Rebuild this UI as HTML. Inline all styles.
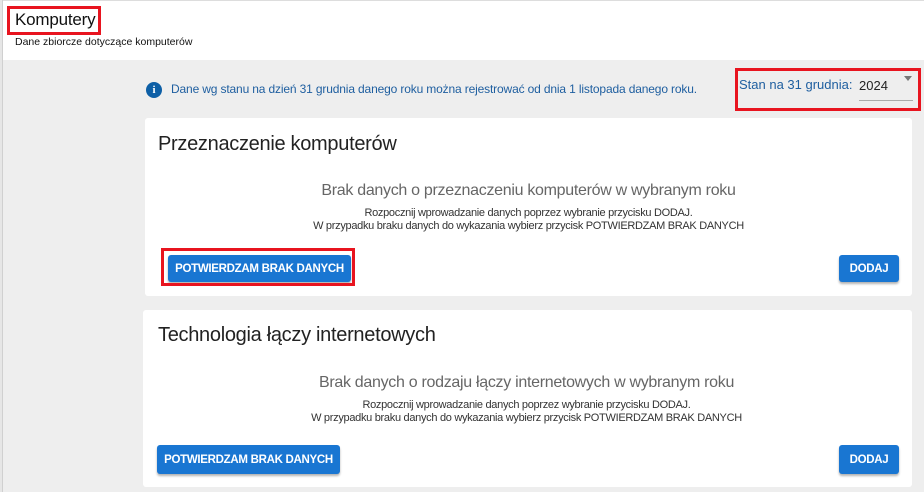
<!DOCTYPE html>
<html><head><meta charset="utf-8"><style>
*{margin:0;padding:0;box-sizing:border-box}
body{width:924px;height:492px;overflow:hidden;background:#eeeeee;font-family:"Liberation Sans",sans-serif;position:relative}
.a{position:absolute;white-space:nowrap}
.hdr{position:absolute;left:3px;top:0;width:921px;height:60px;background:#fff;border-top:1px solid #ddd}
.edge{position:absolute;left:0;top:0;width:3px;height:492px;background:#e6e6e6;border-right:1px solid #d0d0d0}
.red{position:absolute;border:3px solid #e8141f}
.card{position:absolute;background:#fff;border-radius:3px}
.btn{position:absolute;background:#1976d2;color:#fff;font-size:11.5px;font-weight:bold;display:flex;align-items:center;justify-content:center;border-radius:3px;box-shadow:0 2px 2px rgba(0,0,0,.3);letter-spacing:-0.3px}
.ttl{font-size:20px;color:#222;letter-spacing:-0.3px}
.c1{font-size:16px;color:#666;width:767px;text-align:center;letter-spacing:-0.3px}
.c2{font-size:11px;color:#333;width:767px;text-align:center;line-height:13px;letter-spacing:-0.3px}
</style></head><body>
<div class="edge"></div>
<div class="hdr"></div>
<div class="a" style="left:15px;top:10px;font-size:17px;color:#111;letter-spacing:-0.2px">Komputery</div>
<div class="red" style="left:7px;top:6px;width:94px;height:29px"></div>
<div class="a" style="left:15px;top:36px;font-size:10.5px;color:#111">Dane zbiorcze dotyczące komputerów</div>

<div class="a" style="left:146px;top:82px;width:16px;height:16px;border-radius:50%;background:#0d5fa6;color:#fff;font-size:11px;font-weight:bold;text-align:center;line-height:16px;font-family:'Liberation Serif',serif">i</div>
<div class="a" style="left:171px;top:82px;font-size:12px;color:#1f5fa0;letter-spacing:-0.15px">Dane wg stanu na dzień 31 grudnia danego roku można rejestrować od dnia 1 listopada danego roku.</div>
<div class="a" style="left:739px;top:77px;font-size:13px;color:#1f5fa0">Stan na 31 grudnia:</div>
<div class="a" style="left:859px;top:78px;font-size:13px;color:#222">2024</div>
<div class="a" style="left:904px;top:76px;width:0;height:0;border-left:4px solid transparent;border-right:4px solid transparent;border-top:5px solid #777"></div>
<div class="a" style="left:859px;top:100px;width:54px;height:1px;background:#aaa"></div>
<div class="red" style="left:735px;top:68px;width:186px;height:43px"></div>

<div class="card" style="left:145px;top:118px;width:767px;height:178px">
 <div class="a ttl" style="left:13px;top:15px">Przeznaczenie komputerów</div>
 <div class="a c1" style="left:0;top:64px">Brak danych o przeznaczeniu komputerów w wybranym roku</div>
 <div class="a c2" style="left:0;top:89px">Rozpocznij wprowadzanie danych poprzez wybranie przycisku DODAJ.<br>W przypadku braku danych do wykazania wybierz przycisk POTWIERDZAM BRAK DANYCH</div>
</div>
<div class="btn" style="left:168px;top:255px;width:183px;height:27px">POTWIERDZAM BRAK DANYCH</div>
<div class="red" style="left:161px;top:248px;width:194px;height:38px"></div>
<div class="btn" style="left:839px;top:255px;width:60px;height:27px">DODAJ</div>

<div class="card" style="left:143px;top:310px;width:769px;height:177px">
 <div class="a ttl" style="left:15px;top:14px">Technologia łączy internetowych</div>
 <div class="a c1" style="left:0;top:64px">Brak danych o rodzaju łączy internetowych w wybranym roku</div>
 <div class="a c2" style="left:0;top:89px">Rozpocznij wprowadzanie danych poprzez wybranie przycisku DODAJ.<br>W przypadku braku danych do wykazania wybierz przycisk POTWIERDZAM BRAK DANYCH</div>
</div>
<div class="btn" style="left:157px;top:445px;width:183px;height:29px">POTWIERDZAM BRAK DANYCH</div>
<div class="btn" style="left:839px;top:445px;width:60px;height:29px">DODAJ</div>
</body></html>
